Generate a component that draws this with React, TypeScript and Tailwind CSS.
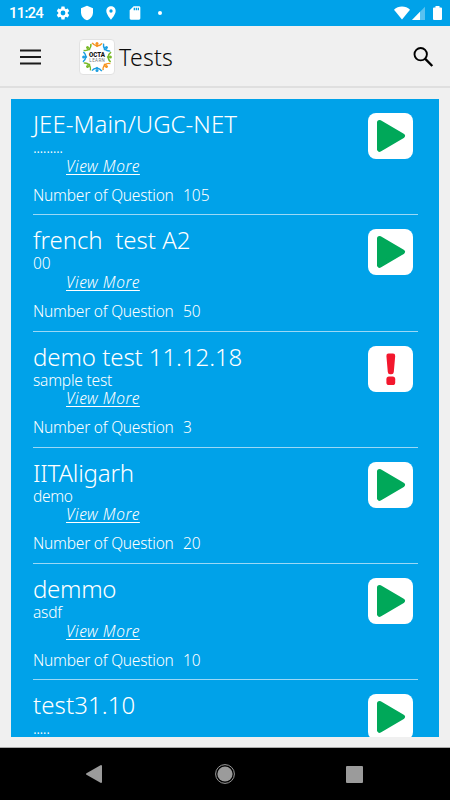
import React from "react";

type Test = {
  title: string;
  titleClass: string;
  note: string;
  noteClass: string;
  count: string;
  locked?: boolean;
};

const tests: Test[] = [
  { title: "JEE-Main/UGC-NET", titleClass: "tracking-[0.05px]", note: ".........", noteClass: "tracking-[-0.5px]", count: "105" },
  { title: "french  test A2", titleClass: "", note: "00", noteClass: "", count: "50" },
  { title: "demo test 11.12.18", titleClass: "tracking-[-0.07px]", note: "sample test", noteClass: "tracking-[-0.2px]", count: "3", locked: true },
  { title: "IITAligarh", titleClass: "tracking-[-0.2px]", note: "demo", noteClass: "tracking-[-0.3px]", count: "20" },
  { title: "demmo", titleClass: "tracking-[-0.3px]", note: "asdf", noteClass: "tracking-[-0.2px]", count: "10" },
  { title: "test31.10", titleClass: "tracking-[0.1px]", note: ".....", noteClass: "tracking-[-0.5px]", count: "10" },
];

function StatusBar() {
  return (
    <header className="flex h-[26px] shrink-0 items-center bg-[#00a2e9] pl-[9px] pr-[8px] text-white">
      <span className="w-[46px] font-['Roboto'] text-[15px] font-medium leading-none tracking-[-0.8px]">11:24</span>
      <svg className="h-[16px] w-[16px]" viewBox="0 0 24 24" fill="currentColor">
        <path d="M19.14 12.94c.04-.3.06-.61.06-.94 0-.32-.02-.64-.07-.94l2.03-1.58a.49.49 0 0 0 .12-.61l-1.92-3.32a.488.488 0 0 0-.59-.22l-2.39.96c-.5-.38-1.03-.7-1.62-.94l-.36-2.54a.484.484 0 0 0-.48-.41h-3.84c-.24 0-.43.17-.47.41l-.36 2.54c-.59.24-1.13.57-1.62.94l-2.39-.96c-.22-.08-.47 0-.59.22L2.74 8.87c-.12.21-.08.47.12.61l2.03 1.58c-.05.3-.09.63-.09.94s.02.64.07.94l-2.03 1.58a.49.49 0 0 0-.12.61l1.92 3.32c.12.22.37.29.59.22l2.39-.96c.5.38 1.03.7 1.62.94l.36 2.54c.05.24.24.41.48.41h3.84c.24 0 .44-.17.47-.41l.36-2.54c.59-.24 1.13-.56 1.62-.94l2.39.96c.22.08.47 0 .59-.22l1.92-3.32c.12-.22.07-.47-.12-.61l-2.01-1.58zM12 15.6A3.6 3.6 0 1 1 12 8.400a3.6 3.6 0 0 1 0 7.200z" />
      </svg>
      <svg className="ml-[8px] h-[16px] w-[16px]" viewBox="0 0 24 24" fill="currentColor">
        <path d="M12 1 3 5v6c0 5.550 3.840 10.740 9 12 5.160-1.260 9-6.450 9-12V5z" />
      </svg>
      <svg className="ml-[8px] h-[16px] w-[16px]" viewBox="0 0 24 24" fill="currentColor">
        <path d="M12 2C8.130 2 5 5.130 5 9c0 5.250 7 13 7 13s7-7.750 7-13c0-3.870-3.130-7-7-7zm0 9.500a2.500 2.500 0 1 1 0-5 2.500 2.500 0 0 1 0 5z" />
      </svg>
      <svg className="ml-[8px] h-[16px] w-[16px]" viewBox="0 0 24 24" fill="currentColor">
        <path d="M18 2h-8L4 8v12c0 1.100.9 2 2 2h12c1.100 0 2-.9 2-2V4c0-1.100-.9-2-2-2zm-6 6h-2V4h2zm3 0h-2V4h2zm3 0h-2V4h2z" />
      </svg>
      <span className="ml-[15px] h-[4px] w-[4px] rounded-full bg-white" />
      <svg className="ml-auto h-[14px] w-[16px]" viewBox="0 0 16 14" fill="currentColor">
        <path d="M8 13.500 0 3.700C2.200 1.700 5 .6 8 .6s5.800 1.100 8 3.100z" />
      </svg>
      <svg className="ml-[2px] h-[14px] w-[13px]" viewBox="0 0 13 14" fill="currentColor">
        <path d="M0 14 13 .7V14z" opacity=".35" />
        <path d="M0 14 8 5.800V14z" />
      </svg>
      <svg className="ml-[8px] h-[14px] w-[9px]" viewBox="0 0 9 14" fill="currentColor">
        <path d="M2.500 0h4v1.500H8q1 0 1 1V13q0 1-1 1H1q-1 0-1-1V2.500q0-1 1-1h1.500z" />
      </svg>
    </header>
  );
}

const ring = ["#f7931e", "#1c9fe0", "#7ab929", "#f7931e", "#1c9fe0", "#7ab929", "#1c9fe0", "#7ab929"];

function Logo() {
  return (
    <div className="ml-[38px] mt-[1px] flex h-[36px] w-[36px] items-center justify-center rounded-[4px] border border-[#e2e2e2] bg-white">
      <svg className="h-[34px] w-[34px] shrink-0" viewBox="0 0 34 34">
        {ring.map((color, i) => (
          <g key={i} transform={`rotate(${i * 45} 17 17)`}>
            <circle cx="17" cy="3.600" r="1.500" fill={color} />
            <path d="M12.200 2.900Q13.800 5.500 17 5.700T22 3.300" fill="none" stroke={color} strokeWidth="1.400" />
            <path d="M14.500 5.200 17 7.300 19.500 5.200z" fill={color} />
          </g>
        ))}
        <text x="9" y="17.200" textLength="16" lengthAdjust="spacingAndGlyphs" className="fill-[#111] font-['Roboto'] text-[6.800px] font-black">OCTA</text>
        <text x="9.300" y="22.400" textLength="15.500" className="fill-[#777] font-['Roboto'] text-[4.500px]">LEARN</text>
      </svg>
    </div>
  );
}

function AppBar() {
  return (
    <div className="flex h-[62px] shrink-0 items-center border-b-2 border-[#dfdfdf] bg-[#f0f0f0] pl-[20px] pr-[15px] text-[#0b0b0b]">
      <svg className="mt-[1px] h-[16px] w-[21px]" viewBox="0 0 21 16" stroke="#1b1b1b" strokeWidth="1.800">
        <path d="M0 1.500h21M0 8h21M0 14.500h21" />
      </svg>
      <Logo />
      <h1 className="ml-[4px] mt-[2px] whitespace-nowrap font-['Noto_Sans'] text-[23px] font-light leading-none tracking-[0.3px]">Tests</h1>
      <svg className="ml-auto mt-[1px] h-[26px] w-[24px]" viewBox="0 0 24 26" fill="none" stroke="black" strokeWidth="1.900">
        <circle cx="9.700" cy="10.200" r="6.200" />
        <path d="m14 14.700 7.300 7.300" strokeWidth="2.400" />
      </svg>
    </div>
  );
}

function StatusTile({ locked }: { locked?: boolean }) {
  return (
    <div className="mt-[14px] flex h-[46px] w-[45px] shrink-0 rounded-[8px] bg-white">
      <svg className="h-[46px] w-[45px]" viewBox="0 0 45 46">
        {locked ? (
          <g fill="#f3172d">
            <path d="M20.500 7.600h4.500q2.300 0 2.200 2.300L25.800 26q-.2 2.300-2.400 2.300h-1.400q-2 0-2.200-2.300L18.400 9.900q-.1-2.300 2.100-2.300z" />
            <rect x="18.400" y="30.600" width="8.800" height="8.400" rx="2.600" />
          </g>
        ) : (
          <path d="M11.500 9.500 34.500 22.800 11.500 36.300z" fill="#00a859" stroke="#00a859" strokeWidth="5" strokeLinejoin="round" />
        )}
      </svg>
    </div>
  );
}

function TestRow({ test }: { test: Test }) {
  return (
    <li className="flex h-[116.25px] shrink-0 justify-between border-b border-[#9bd8f6] pr-[5px]">
      <div className="whitespace-pre pt-[11px] text-[15.500px] leading-[18px]">
        <h2 className={`text-[24px] leading-[28px] ${test.titleClass}`}>{test.title}</h2>
        <p className={test.noteClass}>{test.note}</p>
        <p className="ml-[33px] mt-[0.600px] w-[74px] italic tracking-[0.550px] underline decoration-1 underline-offset-2">View More</p>
        <p className="mt-[11px] flex">
          <span className="w-[150px] tracking-[-0.220px]">Number of Question</span>
          <span>{test.count}</span>
        </p>
      </div>
      <StatusTile locked={test.locked} />
    </li>
  );
}

function NavBar() {
  return (
    <nav className="flex h-[53px] shrink-0 items-center justify-between border-t border-[#aaa] bg-black pl-[85px] pr-[87px]">
      <svg className="h-[20px] w-[18px]" viewBox="0 0 18 20">
        <path d="M2 10 16 2v16z" fill="#9b9b9b" stroke="#9b9b9b" strokeWidth="2" strokeLinejoin="round" />
      </svg>
      <svg className="h-[20px] w-[20px]" viewBox="0 0 20 20">
        <circle cx="10" cy="10" r="9.400" fill="none" stroke="#9b9b9b" />
        <circle cx="10" cy="10" r="7.600" fill="#9b9b9b" />
      </svg>
      <span className="h-[17px] w-[17px] rounded-[1px] bg-[#9b9b9b]" />
    </nav>
  );
}

export default function App() {
  return (
    <div className="flex h-[800px] w-[450px] flex-col overflow-hidden bg-[#f0f0f0] font-['Noto_Sans',sans-serif]">
      <StatusBar />
      <AppBar />
      <main className="mx-[11px] mb-[10px] mt-[11px] min-h-0 flex-1 overflow-hidden bg-[#00a2e9] pl-[22px] pr-[21px] font-light text-white">
        <ul className="flex flex-col">
          {tests.map((test) => (
            <TestRow key={test.title} test={test} />
          ))}
        </ul>
      </main>
      <NavBar />
    </div>
  );
}
